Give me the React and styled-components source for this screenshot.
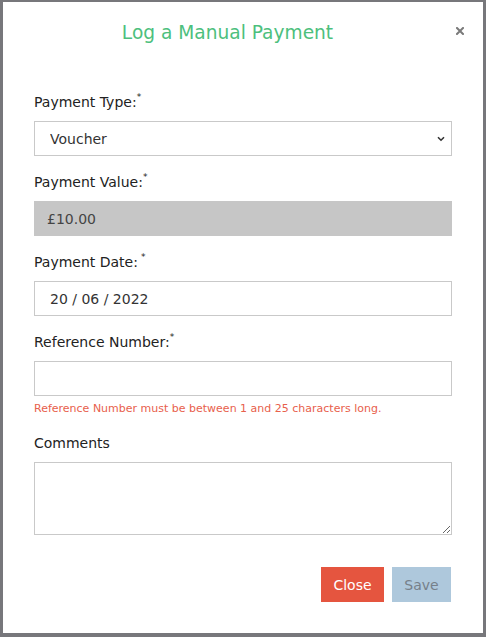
import React from 'react';
import styled, { createGlobalStyle } from 'styled-components';

const GlobalStyle = createGlobalStyle`
  html, body { margin: 0; padding: 0; }
  body {
    background: #77777b;
    font-family: "DejaVu Sans", "Noto Sans", sans-serif;
    color: #222;
  }
  * { box-sizing: border-box; }
`;

const Backdrop = styled.div`
  width: 486px;
  height: 637px;
  padding: 2px 3px 4px 3px;
`;

const Modal = styled.div`
  background: #fff;
  width: 480px;
  height: 631px;
  display: flex;
  flex-direction: column;
`;

const Header = styled.div`
  display: flex;
  align-items: center;
  padding: 19px 19px 0 16px;
  height: 43px;
`;

const Title = styled.h2`
  flex: 1;
  margin: 0;
  text-align: center;
  font-size: 18.6px;
  line-height: 24px;
  font-weight: 500;
  color: #4dbf7d;
`;

const CloseX = styled.button`
  border: 0;
  background: none;
  padding: 0;
  margin-left: 20px;
  width: 8px;
  height: 8px;
  display: flex;
  margin-top: -4px;
  cursor: pointer;
`;

const Body = styled.form`
  padding: 47px 31px 0 31px;
  display: flex;
  flex-direction: column;
`;

const Group = styled.div`
  display: flex;
  flex-direction: column;
  margin-bottom: ${p => p.$gap ?? 16}px;
`;

const Label = styled.label`
  font-size: 14px;
  line-height: 20px;
  margin-bottom: 9px;
  color: #222;
`;

const Req = styled.sup`
  font-size: 9px;
  line-height: 0;
  vertical-align: top;
  position: relative;
  top: 5px;
  margin-left: ${p => (p.$spaced ? '3px' : '0')};
`;

const fieldBase = `
  width: 100%;
  height: 35px;
  border: 1px solid #c9c9c9;
  border-radius: 0;
  font-family: "DejaVu Sans", "Noto Sans", sans-serif;
  font-size: 14px;
  color: #333;
  outline: none;
`;

const SelectWrap = styled.div`
  position: relative;
`;

const Select = styled.select`
  ${fieldBase}
  appearance: none;
  background: #fff;
  padding: 0 30px 0 15px;
`;

const Chevron = styled.svg`
  position: absolute;
  right: 7px;
  top: 15px;
  pointer-events: none;
`;

const Input = styled.input`
  ${fieldBase}
  padding: 0 ${p => (p.$disabled ? 12 : 15)}px;
  background: ${p => (p.$disabled ? '#c6c6c6' : '#fff')};
  border-color: ${p => (p.$disabled ? '#c6c6c6' : '#c9c9c9')};
  color: ${p => (p.$disabled ? '#444' : '#333')};
`;

const ErrorText = styled.div`
  font-size: 11px;
  line-height: 16px;
  margin-top: 5px;
  color: #e8604c;
`;

const TextArea = styled.textarea`
  ${fieldBase}
  height: 73px;
  padding: 8px 12px;
  resize: both;
`;

const Footer = styled.div`
  display: flex;
  justify-content: flex-end;
  gap: 8px;
  margin-top: 32px;
  margin-right: 1px;
`;

const Button = styled.button`
  height: 35px;
  width: ${p => p.$w}px;
  padding: 0;
  border: 0;
  border-radius: 0;
  font-family: "DejaVu Sans", "Noto Sans", sans-serif;
  font-size: 14px;
  background: ${p => p.$bg};
  color: ${p => p.$fg};
  cursor: pointer;
`;

export default function App() {
  return (
    <>
      <GlobalStyle />
      <Backdrop>
        <Modal>
          <Header>
            <Title>Log a Manual Payment</Title>
            <CloseX aria-label="Close">
              <svg width="8" height="8" viewBox="0 0 8 8">
                <path d="M1 1L7 7M7 1L1 7" stroke="#7a7a7a" strokeWidth="2" strokeLinecap="square" />
              </svg>
            </CloseX>
          </Header>
          <Body onSubmit={e => e.preventDefault()}>
            <Group>
              <Label>Payment Type:<Req>*</Req></Label>
              <SelectWrap>
                <Select defaultValue="Voucher">
                  <option>Voucher</option>
                  <option>Cash</option>
                  <option>Card</option>
                </Select>
                <Chevron width="8" height="6" viewBox="0 0 8 6">
                  <path d="M1 1.2L4 4.2L7 1.2" fill="none" stroke="#333" strokeWidth="1.6" />
                </Chevron>
              </SelectWrap>
            </Group>
            <Group>
              <Label>Payment Value:<Req>*</Req></Label>
              <Input $disabled readOnly value="£10.00" />
            </Group>
            <Group>
              <Label>Payment Date:<Req $spaced>*</Req></Label>
              <Input readOnly value="20 / 06 / 2022" />
            </Group>
            <Group>
              <Label>Reference Number:<Req>*</Req></Label>
              <Input defaultValue="" />
              <ErrorText>Reference Number must be between 1 and 25 characters long.</ErrorText>
            </Group>
            <Group $gap={0}>
              <Label>Comments</Label>
              <TextArea />
            </Group>
            <Footer>
              <Button type="button" $bg="#e5553f" $fg="#fff" $w={63}>Close</Button>
              <Button type="button" $bg="#aec8dc" $fg="#76808a" $w={59}>Save</Button>
            </Footer>
          </Body>
        </Modal>
      </Backdrop>
    </>
  );
}
